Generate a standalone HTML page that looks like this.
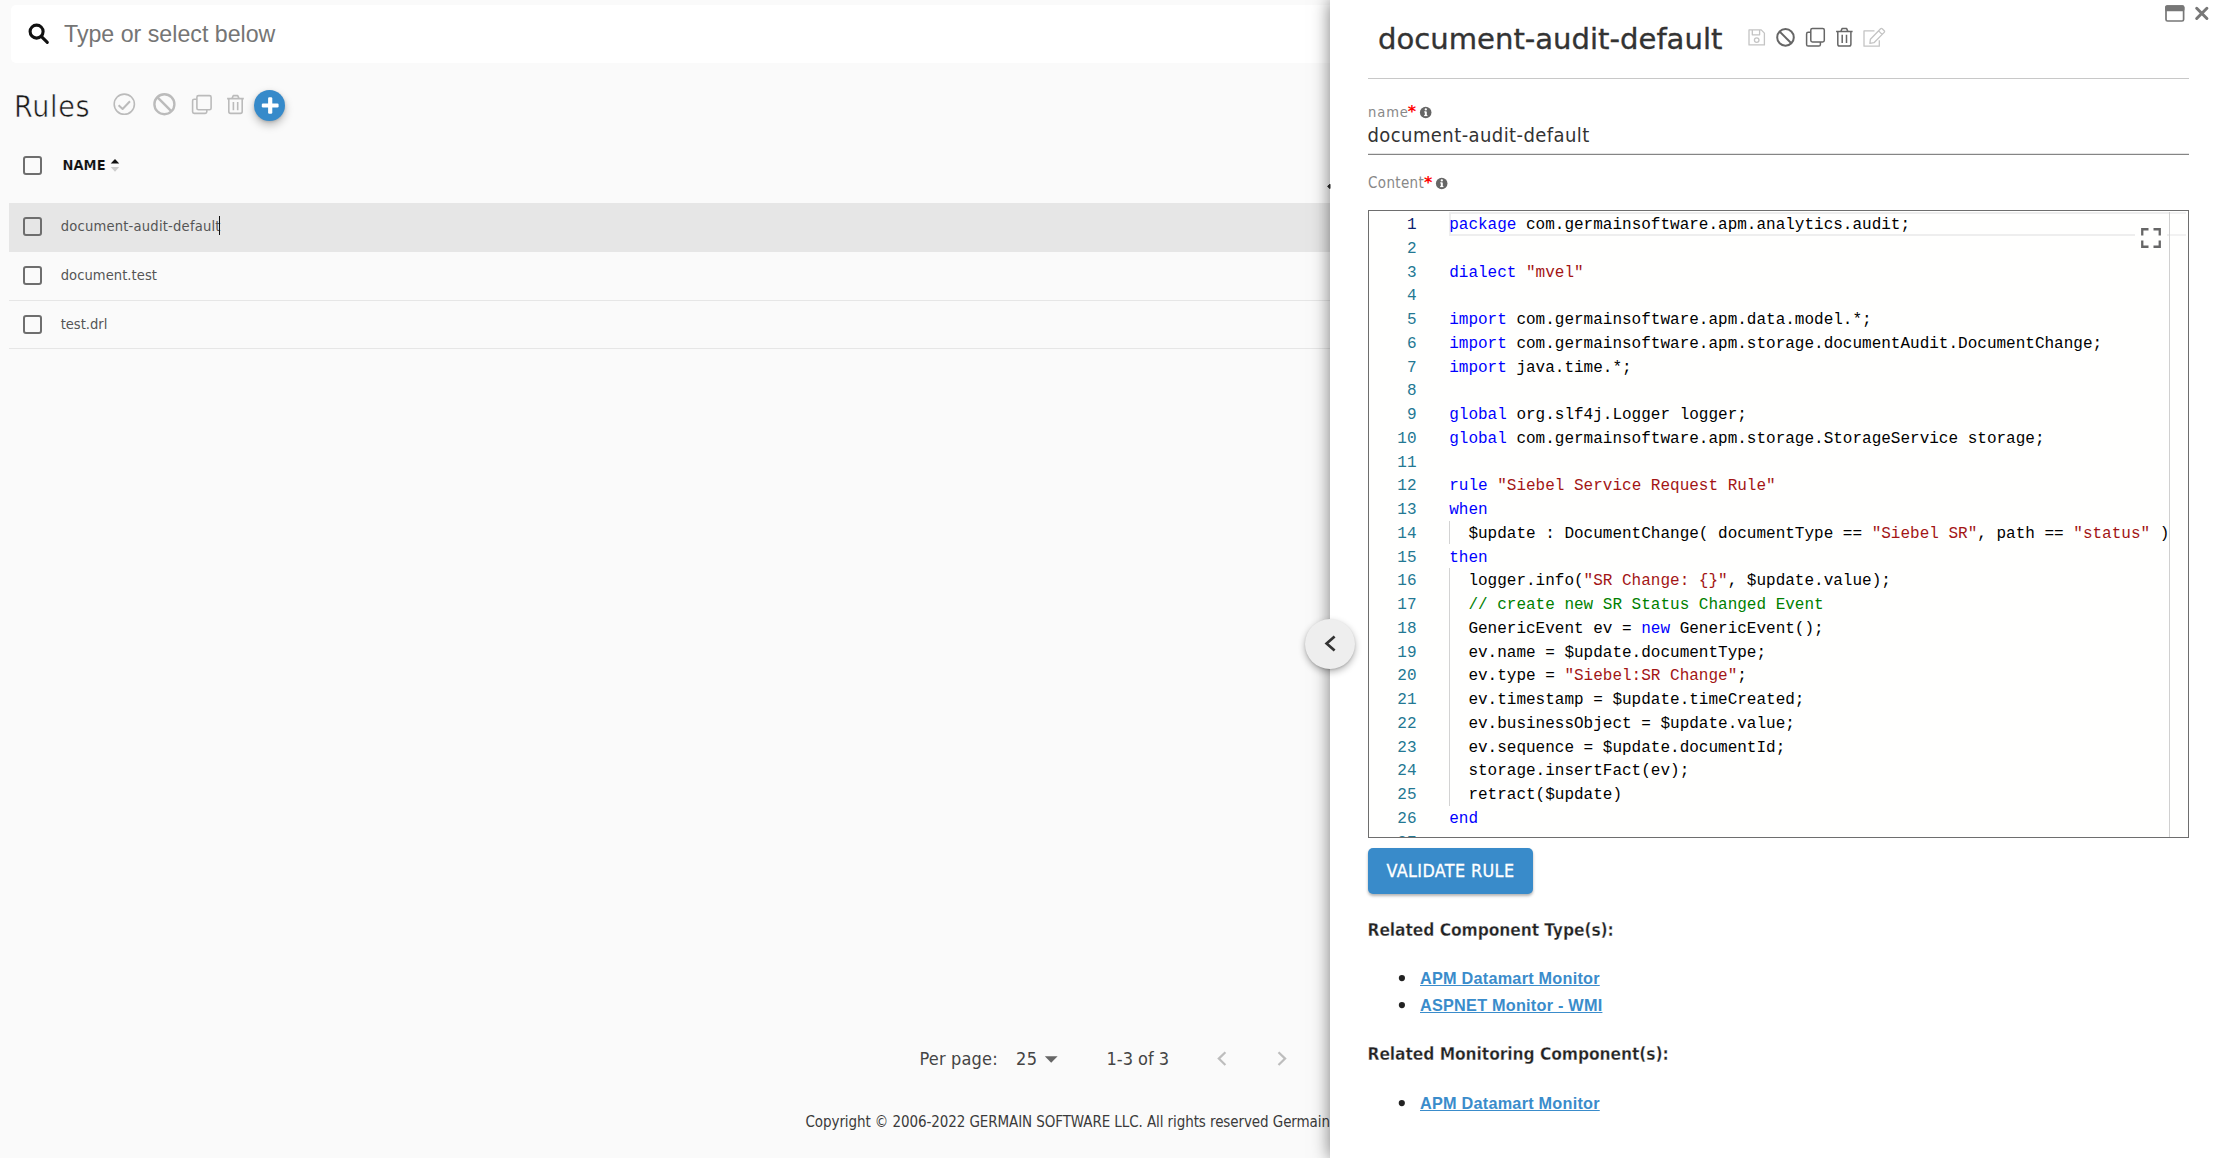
<!DOCTYPE html>
<html lang="en">
<head>
<meta charset="utf-8">
<title>Rules</title>
<style>
*{box-sizing:border-box;margin:0;padding:0}
html,body{width:2219px;height:1158px;overflow:hidden;background:#fafafa}
body{position:relative;font-family:"DejaVu Sans Condensed","DejaVu Sans","Liberation Sans",sans-serif;font-stretch:condensed;color:#333}
.abs{position:absolute;white-space:nowrap;line-height:1}
.os{font-family:"DejaVu Sans Condensed","DejaVu Sans","Liberation Sans",sans-serif;font-stretch:condensed}
.ar{font-family:"Liberation Sans",sans-serif;font-stretch:normal}
svg{position:absolute;overflow:visible}
/* left */
#search{position:absolute;left:11px;top:5px;width:1340px;height:58px;background:#fff;border-radius:5px}
.cb{position:absolute;left:23px;width:19px;height:19px;border:2px solid #6e6e6e;border-radius:3px;background:transparent}
.row{position:absolute;left:9px;width:1330px;height:48.75px;border-bottom:1px solid #e6e6e6}
.rt{font-size:14.6px;color:#555;left:60.7px;letter-spacing:.21px}
/* panel */
#panel{position:absolute;left:1330px;top:0;width:889px;height:1158px;background:#fff;box-shadow:0 0 17px rgba(0,0,0,.52)}
#ed{position:absolute;left:1368px;top:210px;width:821px;height:628px;border:1.25px solid #6e6e6e;background:#fffffe;overflow:hidden}
.ln{margin-top:2.2px;position:absolute;left:0;width:47.5px;text-align:right;color:#237893;font:16px/23.75px "Liberation Mono",monospace;white-space:pre}
.cl{margin-top:2.2px;position:absolute;left:80.2px;color:#000;font:16px/23.75px "Liberation Mono",monospace;white-space:pre}
.k{color:#0000ff}.s{color:#a31515}.c{color:#008000}
.gd{position:absolute;left:80px;width:1px;background:#d3d3d3}
a.lk{color:#3a8ccb;text-decoration:underline;font:bold 16.25px/1 "Liberation Sans",sans-serif;letter-spacing:.23px;font-stretch:normal}
</style>
</head>
<body>
<!-- LEFT -->
<div id="search"></div>
<div class="abs ar" id="ph" style="left:64px;top:22.5px;font-size:23.2px;color:#757575">Type or select below</div>
<div class="abs os" id="rules" style="left:14px;top:92px;font-size:30px;color:#1a1a1a;-webkit-text-stroke:.55px #fafafa;letter-spacing:.75px">Rules</div>
<div class="cb" style="top:156px"></div>
<div class="abs os" id="nameh" style="left:62.5px;top:157.5px;font-size:14.5px;font-weight:bold;color:#111;letter-spacing:.05px;-webkit-text-stroke:.12px #fafafa">NAME</div>
<div class="row" style="top:202.5px;height:49px;background:#e6e6e6;border-bottom:none"></div>
<div class="row" style="top:251.5px;height:49.5px"></div>
<div class="row" style="top:301px;height:48.4px"></div>
<div class="cb" style="top:217px"></div>
<div class="cb" style="top:266px"></div>
<div class="cb" style="top:315px"></div>
<div class="abs os rt" id="r1" style="top:219px">document-audit-default</div>
<div class="abs os rt" id="r2" style="top:267.75px;letter-spacing:.05px">document.test</div>
<div class="abs os rt" id="r3" style="top:316.5px;letter-spacing:-.02px">test.drl</div>
<div class="abs" style="left:219px;top:216px;width:1.3px;height:19px;background:#111"></div>
<div class="abs os" id="pp" style="left:919.5px;top:1050.2px;font-size:18px;color:#444;letter-spacing:.17px">Per page:</div>
<div class="abs os" id="p25" style="left:1016px;top:1050.2px;font-size:18px;color:#444;letter-spacing:.5px">25</div>
<div class="abs os" id="p13" style="left:1106.5px;top:1050.2px;font-size:18px;color:#444">1-3 of 3</div>
<div class="abs os" id="copy" style="left:805.5px;top:1115px;font-size:15px;color:#3a3a3a;letter-spacing:-.088px"><span id="copyv">Copyright © 2006-2022 GERMAIN SOFTWARE LLC. All rights reserved Germain</span></div>

<!-- search icon -->
<svg style="left:0;top:0" width="60" height="60" viewBox="0 0 60 60" fill="none" stroke="#111" stroke-width="3.1"><circle cx="36.6" cy="31.6" r="6.5"/><path d="M41.5 36.6L47.3 42.3" stroke-linecap="round"/></svg>
<!-- toolbar icons -->
<svg style="left:100px;top:80px" width="200" height="50" viewBox="100 80 200 50" fill="none" stroke="#bbb" stroke-width="1.6" stroke-linejoin="round">
<circle cx="124.3" cy="104.2" r="10.1"/><path d="M118.6 105.2L122.6 109L130 101.2" stroke-width="2"/>
<circle cx="164.4" cy="104.2" r="10" stroke-width="2.4"/><path d="M157.3 97.1L171.5 111.3" stroke-width="2.4"/>
<rect x="196.9" y="95.6" width="14.2" height="14.2" rx="1.6"/><path d="M196.9 99.2H194.2Q192.6 99.2 192.6 100.8V111.8Q192.6 113.4 194.2 113.4H205.2Q206.8 113.4 206.8 111.8V109.8"/>
<path d="M227.1 98.6H243.8M231.9 98.6L233.3 95.6H237.7L239.1 98.6M228.8 98.6V111.6Q228.8 113.4 230.6 113.4H240.4Q242.2 113.4 242.2 111.6V98.6M233.4 102V110.3M237.7 102V110.3"/>
</svg>
<div class="abs" style="left:253.9px;top:89.7px;width:31.2px;height:31.2px;border-radius:50%;background:#368aca;box-shadow:0 4px 8px rgba(0,0,0,.26),0 1px 3px rgba(0,0,0,.14)"></div>
<svg style="left:253.9px;top:89.7px" width="31.2" height="31.2" viewBox="0 0 31.2 31.2" fill="#fff"><rect x="7.8" y="13.6" width="16.8" height="3.8" rx="1.2"/><rect x="14.1" y="7.3" width="4.2" height="16.5" rx="1.2"/></svg>
<!-- sort arrows -->
<svg style="left:110px;top:158px" width="10" height="15" viewBox="0 0 10 15"><path d="M0.7 5.6L5 0.9L9.2 5.6Z" fill="#111"/><path d="M0.7 8.9L5 13.7L9.2 8.9Z" fill="#ccc"/></svg>
<!-- pagination icons -->
<svg style="left:1040px;top:1050px" width="260" height="20" viewBox="1040 1050 260 20" fill="none" stroke="#bdbdbd" stroke-width="2.2"><path d="M1044.8 1056.2H1057.6L1051.2 1062.7Z" fill="#666" stroke="none"/><path d="M1225.4 1052.2L1218.8 1058.6L1225.4 1065"/><path d="M1278.5 1052.2L1285.1 1058.6L1278.5 1065"/></svg>
<!-- PANEL -->
<div id="panel"></div>
<div class="abs os" id="title" style="left:1378px;top:25px;font:29.1px/1 'DejaVu Sans',sans-serif;font-stretch:normal;color:#333;-webkit-text-stroke:.35px #333">document-audit-default</div>
<div class="abs" style="left:1368px;top:78px;width:821px;height:1px;background:#c8c8c8"></div>
<div class="abs os" id="lname" style="left:1368px;top:104.6px;font-size:14.6px;color:#888;letter-spacing:.9px">name</div>
<div class="abs" id="ast1" style="left:1407.8px;top:103.6px;font:bold 16px/1 'DejaVu Sans',sans-serif;font-stretch:normal;color:#f00">*</div>
<div class="abs os" id="vname" style="left:1367.5px;top:125.3px;font-size:20px;color:#333;letter-spacing:.42px">document-audit-default</div>
<div class="abs" style="left:1368px;top:153px;width:821px;height:1px;background:#e4e4e4"></div><div class="abs" style="left:1368px;top:154px;width:821px;height:1px;background:#858585"></div>
<div class="abs os" id="lcontent" style="left:1368px;top:175.6px;font-size:15px;color:#888;letter-spacing:.35px">Content</div>
<div class="abs" id="ast2" style="left:1423.9px;top:174.8px;font:bold 16px/1 'DejaVu Sans',sans-serif;font-stretch:normal;color:#f00">*</div>
<div id="ed"><div id="edin" style="position:absolute;left:0;top:0.95px;width:100%;height:100%">
<div style="position:absolute;left:79.8px;top:0;width:721px;height:24.2px;border:2px solid #eee;border-right:none"></div><div style="position:absolute;left:801px;top:0;width:16px;height:24.2px;border-top:2px solid #f2f2f2;border-bottom:2px solid #f2f2f2"></div>
<div class="gd" style="top:308.75px;height:23.75px"></div>
<div class="gd" style="top:356.25px;height:237.5px"></div>
<div style="position:absolute;left:800.2px;top:0;width:1px;height:640px;background:#d0d0d0"></div>
<div style="position:absolute;left:766px;top:8px;width:32px;height:36px;background:#fffffe"></div>
<svg style="left:772.4px;top:16.4px" width="20" height="20" viewBox="0 0 20 20" fill="none" stroke="#666" stroke-width="2.3"><path d="M1.25 7.5V1.25H7.5M12.5 1.25H18.75V7.5M18.75 12.5V18.75H12.5M7.5 18.75H1.25V12.5"/></svg>
<div class="ln" style="top:0.0px;color:#0b216f">1</div><div class="cl" style="top:0.0px"><span class="k">package</span> com.germainsoftware.apm.analytics.audit;</div>
<div class="ln" style="top:23.75px">2</div>
<div class="ln" style="top:47.5px">3</div><div class="cl" style="top:47.5px"><span class="k">dialect</span> <span class="s">"mvel"</span></div>
<div class="ln" style="top:71.25px">4</div>
<div class="ln" style="top:95.0px">5</div><div class="cl" style="top:95.0px"><span class="k">import</span> com.germainsoftware.apm.data.model.*;</div>
<div class="ln" style="top:118.75px">6</div><div class="cl" style="top:118.75px"><span class="k">import</span> com.germainsoftware.apm.storage.documentAudit.DocumentChange;</div>
<div class="ln" style="top:142.5px">7</div><div class="cl" style="top:142.5px"><span class="k">import</span> java.time.*;</div>
<div class="ln" style="top:166.25px">8</div>
<div class="ln" style="top:190.0px">9</div><div class="cl" style="top:190.0px"><span class="k">global</span> org.slf4j.Logger logger;</div>
<div class="ln" style="top:213.75px">10</div><div class="cl" style="top:213.75px"><span class="k">global</span> com.germainsoftware.apm.storage.StorageService storage;</div>
<div class="ln" style="top:237.5px">11</div>
<div class="ln" style="top:261.25px">12</div><div class="cl" style="top:261.25px"><span class="k">rule</span> <span class="s">"Siebel Service Request Rule"</span></div>
<div class="ln" style="top:285.0px">13</div><div class="cl" style="top:285.0px"><span class="k">when</span></div>
<div class="ln" style="top:308.75px">14</div><div class="cl" style="top:308.75px">  $update : DocumentChange( documentType == <span class="s">"Siebel SR"</span>, path == <span class="s">"status"</span> )</div>
<div class="ln" style="top:332.5px">15</div><div class="cl" style="top:332.5px"><span class="k">then</span></div>
<div class="ln" style="top:356.25px">16</div><div class="cl" style="top:356.25px">  logger.info(<span class="s">"SR Change: {}"</span>, $update.value);</div>
<div class="ln" style="top:380.0px">17</div><div class="cl" style="top:380.0px">  <span class="c">// create new SR Status Changed Event</span></div>
<div class="ln" style="top:403.75px">18</div><div class="cl" style="top:403.75px">  GenericEvent ev = <span class="k">new</span> GenericEvent();</div>
<div class="ln" style="top:427.5px">19</div><div class="cl" style="top:427.5px">  ev.name = $update.documentType;</div>
<div class="ln" style="top:451.25px">20</div><div class="cl" style="top:451.25px">  ev.type = <span class="s">"Siebel:SR Change"</span>;</div>
<div class="ln" style="top:475.0px">21</div><div class="cl" style="top:475.0px">  ev.timestamp = $update.timeCreated;</div>
<div class="ln" style="top:498.75px">22</div><div class="cl" style="top:498.75px">  ev.businessObject = $update.value;</div>
<div class="ln" style="top:522.5px">23</div><div class="cl" style="top:522.5px">  ev.sequence = $update.documentId;</div>
<div class="ln" style="top:546.25px">24</div><div class="cl" style="top:546.25px">  storage.insertFact(ev);</div>
<div class="ln" style="top:570.0px">25</div><div class="cl" style="top:570.0px">  retract($update)</div>
<div class="ln" style="top:593.75px">26</div><div class="cl" style="top:593.75px"><span class="k">end</span></div>
<div class="ln" style="top:617.5px">27</div>
</div></div>
<div class="abs" id="btn" style="left:1368px;top:848px;width:165px;height:45.5px;border-radius:5px;background:#398bca;box-shadow:0 2px 3px rgba(0,0,0,.3)"></div>
<div class="abs os" id="btnt" style="left:1386.5px;top:862px;font-size:17.8px;color:#fff;letter-spacing:.4px;-webkit-text-stroke:.3px #fff">VALIDATE RULE</div>
<div class="abs os" id="h1" style="left:1367.5px;top:922.3px;font-size:17.3px;letter-spacing:-.09px;-webkit-text-stroke:.3px #fff;font-weight:bold;color:#222">Related Component Type(s):</div>
<div class="abs os" id="h2" style="left:1367.5px;top:1046px;font-size:17.3px;letter-spacing:-.09px;-webkit-text-stroke:.3px #fff;font-weight:bold;color:#222">Related Monitoring Component(s):</div>
<a class="abs lk" id="l1" style="left:1420px;top:970px">APM Datamart Monitor</a>
<a class="abs lk" id="l2" style="left:1420px;top:997px">ASPNET Monitor - WMI</a>
<a class="abs lk" id="l3" style="left:1420px;top:1095px">APM Datamart Monitor</a>

<!-- collapse btn -->
<div class="abs" style="left:1304.9px;top:619.1px;width:50px;height:50px;border-radius:50%;background:#eee;box-shadow:0 3px 7px rgba(0,0,0,.3),0 1px 2px rgba(0,0,0,.12)"></div>
<svg style="left:1304.9px;top:619.1px" width="50" height="50" viewBox="0 0 50 50" fill="none" stroke="#333" stroke-width="2.7"><path d="M29.6 17.6L21.6 24.6L29.6 31.6"/></svg>
<svg style="left:1326px;top:183px" width="5" height="7" viewBox="0 0 5 7"><path d="M4 1.2V5.6L1.6 3.4Z" fill="#222" stroke="#222" stroke-width="1" stroke-linejoin="round"/></svg>
<!-- window + close -->
<svg style="left:2160px;top:0" width="55" height="28" viewBox="2160 0 55 28" fill="none" stroke="#777"><rect x="2166" y="6" width="17.6" height="15" rx="1.6" stroke-width="1.7"/><rect x="2166" y="6" width="17.6" height="4.4" rx="1" fill="#777" stroke-width="1.7"/><path d="M2196.7 8.3L2206.9 18.5M2206.9 8.3L2196.7 18.5" stroke-width="3" stroke-linecap="round"/></svg>
<!-- title icons -->
<svg style="left:1740px;top:20px" width="160" height="35" viewBox="1740 20 160 35" fill="none" stroke-width="1.5" stroke-linejoin="round">
<g stroke="#c4c4c4" stroke-width="1.3"><path d="M1749 29.9H1761.2L1764.4 33.1V44.9H1749Z"/><path d="M1752.3 29.9V34.8H1759.6V29.9"/><circle cx="1756.7" cy="40.1" r="2.3"/></g>
<g stroke="#666"><circle cx="1785.5" cy="37.4" r="8.3" stroke-width="2"/><path d="M1779.7 31.6L1791.3 43.2" stroke-width="2"/>
<rect x="1810.8" y="28.4" width="13.5" height="13.5" rx="1.6"/><path d="M1810.8 32.3H1808.2Q1806.6 32.3 1806.6 33.9V44.5Q1806.6 46.1 1808.2 46.1H1818.8Q1820.4 46.1 1820.4 44.5V41.9"/>
<path d="M1836.1 31.6H1852.6M1840.7 31.6L1842.2 28.4H1846.5L1848 31.6M1837.8 31.6V44.3Q1837.8 46.1 1839.6 46.1H1849.1Q1850.9 46.1 1850.9 44.3V31.6M1842.2 34.8V43M1846.5 34.8V43"/></g>
<g stroke="#c4c4c4" stroke-width="1.3"><path d="M1874.5 30.9H1864V46.2H1879.3V40.3"/><path d="M1870.4 39.2L1880.6 28.8Q1881.4 28 1882.2 28.8L1884.2 30.8Q1885 31.6 1884.2 32.4L1874 42.7L1869.9 43.4Z M1878.6 30.9L1882.1 34.4"/></g>
</svg>
<!-- info icons + asterisks -->
<svg style="left:1419px;top:106px" width="14" height="14" viewBox="0 0 14 14"><circle cx="6.7" cy="6.5" r="5.8" fill="#666"/><rect x="5.8" y="5.6" width="2" height="4.2" fill="#fff"/><rect x="5.2" y="9" width="3.2" height="1.1" fill="#fff"/><rect x="5.2" y="5.4" width="2" height="1" fill="#fff"/><circle cx="6.8" cy="3.4" r="1.15" fill="#fff"/></svg>
<svg style="left:1435.4px;top:176.9px" width="14" height="14" viewBox="0 0 14 14"><circle cx="6.7" cy="6.5" r="5.8" fill="#666"/><rect x="5.8" y="5.6" width="2" height="4.2" fill="#fff"/><rect x="5.2" y="9" width="3.2" height="1.1" fill="#fff"/><rect x="5.2" y="5.4" width="2" height="1" fill="#fff"/><circle cx="6.8" cy="3.4" r="1.15" fill="#fff"/></svg>
<!-- bullets -->
<svg style="left:1395px;top:970px" width="14" height="145" viewBox="0 0 14 145" fill="#222"><circle cx="6.9" cy="8.1" r="3.1"/><circle cx="6.9" cy="35.1" r="3.1"/><circle cx="6.8" cy="133.1" r="3.1"/></svg>
</body>
</html>
